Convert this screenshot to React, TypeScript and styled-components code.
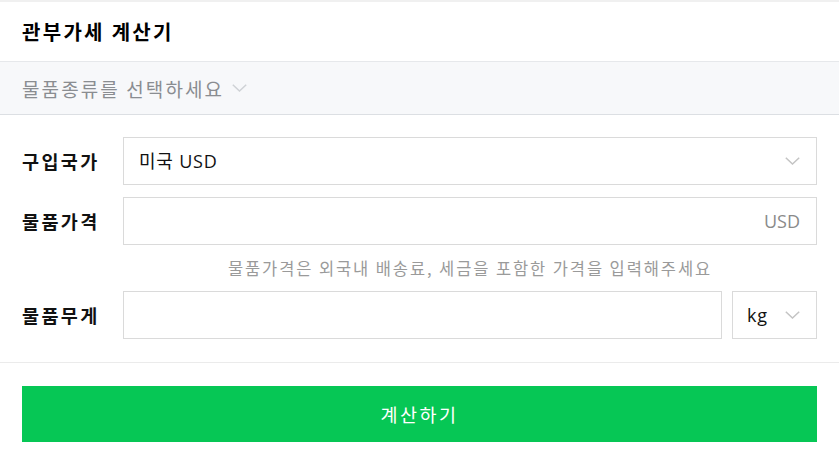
import styled, { createGlobalStyle } from "styled-components";

const GlobalStyle = createGlobalStyle`
  html, body {
    margin: 0;
    padding: 0;
    background: #fff;
  }
  body {
    font-family: "Open Sans", "Noto Sans CJK KR", sans-serif;
    color: #111;
  }
  * {
    box-sizing: border-box;
  }
`;

const Chevron = ({ color = "#c4c4c4", width = 15 }: { color?: string; width?: number }) => (
  <svg width={width} height={8} viewBox="0 0 15 8" fill="none">
    <polyline
      points="0.8,0.8 7.5,7 14.2,0.8"
      stroke={color}
      strokeWidth="1.5"
      strokeLinejoin="miter"
    />
  </svg>
);

const App = () => {
  return (
    <>
      <GlobalStyle />
      <Page>
        <Header>
          <Title>관부가세 계산기</Title>
        </Header>

        <CategoryBar>
          <CategoryText>물품종류를 선택하세요</CategoryText>
          <Chevron color="#cfd2d6" />
        </CategoryBar>

        <Form>
          <Row>
            <Label>구입국가</Label>
            <Field>
              <FieldText>미국 USD</FieldText>
              <Chevron />
            </Field>
          </Row>

          <Row>
            <Label>물품가격</Label>
            <Field>
              <span />
              <Unit>USD</Unit>
            </Field>
          </Row>
          <Hint>물품가격은 외국내 배송료, 세금을 포함한 가격을 입력해주세요</Hint>

          <Row>
            <Label>물품무게</Label>
            <WeightGroup>
              <Field />
              <Field $compact>
                <FieldText>kg</FieldText>
                <Chevron />
              </Field>
            </WeightGroup>
          </Row>
        </Form>

        <Footer>
          <SubmitButton type="button">계산하기</SubmitButton>
        </Footer>
      </Page>
    </>
  );
};

const Page = styled.div`
  width: 839px;
  min-height: 463px;
  background: #fff;
  border-top: 2px solid #f0f0f0;
`;

const Header = styled.div`
  height: 60px;
  padding: 0 22px;
  display: flex;
  align-items: center;
  border-bottom: 1px solid #e6e8eb;
`;

const Title = styled.h1`
  margin: 0;
  font-family: "Noto Sans CJK KR", sans-serif;
  font-size: 20px;
  font-weight: 700;
  letter-spacing: 2.3px;
  line-height: 1;
  color: #000;
`;

const CategoryBar = styled.div`
  height: 53px;
  padding: 0 22px;
  display: flex;
  align-items: center;
  gap: 8px;
  background: #f7f8fa;
  border-bottom: 1px solid #dcdfe3;
`;

const CategoryText = styled.span`
  font-family: "Noto Sans CJK KR", sans-serif;
  font-size: 19px;
  letter-spacing: 2.1px;
  line-height: 1;
  color: #8a8d91;
`;

const Form = styled.div`
  padding: 22px 22px 23px;
  display: flex;
  flex-direction: column;
  border-bottom: 1px solid #ebebeb;
`;

const Row = styled.div`
  display: grid;
  grid-template-columns: 101px 1fr;
  align-items: center;
  height: 48px;

  & + & {
    margin-top: 12px;
  }
`;

const Label = styled.span`
  font-family: "Noto Sans CJK KR", sans-serif;
  font-size: 18.5px;
  font-weight: 700;
  letter-spacing: 2.4px;
  line-height: 1;
  color: #111;
`;

const Field = styled.div<{ $compact?: boolean }>`
  height: 48px;
  border: 1px solid #dadada;
  background: #fff;
  display: flex;
  align-items: center;
  justify-content: space-between;
  padding: ${(p) => (p.$compact ? "0 16px 0 14px" : "0 16px 0 15px")};
  width: ${(p) => (p.$compact ? "85px" : "auto")};
  flex: ${(p) => (p.$compact ? "0 0 auto" : "1 1 auto")};
`;

const FieldText = styled.span`
  font-size: 18px;
  letter-spacing: 0.8px;
  line-height: 1;
  color: #111;
`;

const Unit = styled.span`
  font-size: 18px;
  line-height: 1;
  color: #8a8a8a;
`;

const WeightGroup = styled.div`
  display: flex;
  gap: 10px;
`;

const Hint = styled.p`
  margin: 0 0 0 101px;
  height: 46px;
  display: flex;
  align-items: center;
  justify-content: center;
  font-family: "Noto Sans CJK KR", sans-serif;
  font-size: 16.5px;
  letter-spacing: 1.9px;
  line-height: 1;
  color: #9a9a9a;

  & + ${Row} {
    margin-top: 0;
  }
`;

const Footer = styled.div`
  padding: 23px 22px 19px;
`;

const SubmitButton = styled.button`
  display: block;
  width: 100%;
  height: 56px;
  border: none;
  background: #06c755;
  color: #fff;
  font-family: "Noto Sans CJK KR", sans-serif;
  font-size: 18.5px;
  font-weight: 400;
  letter-spacing: 2.5px;
  cursor: pointer;
`;

export default App;
